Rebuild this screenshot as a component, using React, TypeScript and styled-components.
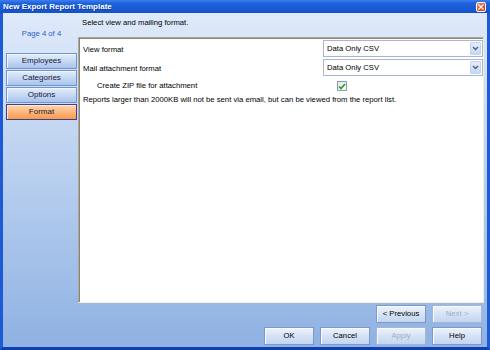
import styled, { createGlobalStyle } from 'styled-components'

const GlobalStyle = createGlobalStyle`
  html, body {
    margin: 0;
    padding: 0;
  }
  body {
    width: 490px;
    height: 350px;
    overflow: hidden;
    font-family: "Liberation Sans", Arial, sans-serif;
    font-size: 7.7px;
    color: #000;
  }
  * {
    box-sizing: border-box;
  }
`

const Window = styled.div`
  width: 490px;
  height: 350px;
  display: flex;
  flex-direction: column;
`

const TitleBar = styled.div`
  height: 13px;
  display: flex;
  align-items: center;
  justify-content: space-between;
  padding: 0 4px 0 3px;
  background: linear-gradient(#3d7ff0 0%, #1e62dc 25%, #195ad6 70%, #1650c6 100%);
`

const TitleText = styled.span`
  font-size: 8px;
  font-weight: 700;
  color: #fff;
  text-shadow: 1px 1px 0 #0d3a9c;
`

const CloseButton = styled.div`
  width: 10px;
  height: 10px;
  margin-top: 1px;
  border: 1px solid #fff;
  border-radius: 2px;
  background: linear-gradient(135deg, #f08a64, #d9512a 60%, #c8401c);
  display: flex;
  align-items: center;
  justify-content: center;
`

const Frame = styled.div`
  flex: 1;
  display: flex;
  flex-direction: column;
  border-left: 3px solid #1d5ad5;
  border-right: 3px solid #1d5ad5;
  border-bottom: 3px solid #0d3fae;
  background: linear-gradient(#dfeafa, #8fb2e3);
`

const Main = styled.div`
  height: 290px;
  display: grid;
  grid-template-columns: 75px 406px;
  grid-template-rows: 24px 1fr;
`

const Sidebar = styled.div`
  grid-row: 1 / span 2;
  display: flex;
  flex-direction: column;
  padding: 16px 1px 0 3px;
`

const PageLabel = styled.div`
  height: 10px;
  line-height: 10px;
  text-align: center;
  color: #2c5fc6;
  margin-bottom: 14px;
`

const NavList = styled.div`
  display: flex;
  flex-direction: column;
  gap: 1px;
`

const NavButton = styled.div<{ active?: boolean }>`
  height: 16px;
  line-height: 14px;
  text-align: center;
  font-size: 8px;
  color: #15203c;
  border: 1px solid ${p => (p.active ? '#3d3f8c' : '#7193d0')};
  background: ${p =>
    p.active
      ? 'linear-gradient(#ffd6ae, #fdb77c 50%, #f99a4e)'
      : 'linear-gradient(#e4edfb, #c6d9f5 50%, #a9c3ec)'};
  box-shadow: inset 1px 1px 0 ${p => (p.active ? '#ffe8cf' : '#f2f7fe')};
`

const Header = styled.div`
  padding: 5px 0 0 4px;
  line-height: 10px;
`

const Panel = styled.div`
  background: #fff;
  border-top: 1px solid #aca899;
  border-left: 1px solid #aca899;
  border-right: 1px solid #f1efe2;
  border-bottom: 1px solid #f1efe2;
  box-shadow: inset 1px 1px 0 #8a877a;
  padding: 2px 0 0 4px;
  display: grid;
  grid-template-columns: 240px 160px;
  grid-auto-rows: min-content;
`

const FieldLabel = styled.div<{ indent?: boolean }>`
  display: flex;
  align-items: center;
  padding-left: ${p => (p.indent ? '14px' : '0')};
`

const Select = styled.div`
  height: 17px;
  margin-bottom: 2px;
  border: 1px solid #a7b7d3;
  background: #fff;
  display: flex;
  align-items: center;
  justify-content: space-between;
  padding: 0 1px 0 3px;
`

const SelectArrow = styled.div`
  width: 11px;
  height: 13px;
  border-radius: 1px;
  background: linear-gradient(#e6eefc, #c6d8f4);
  border: 1px solid #c3d3ee;
  display: flex;
  align-items: center;
  justify-content: center;
`

const CheckCell = styled.div`
  height: 12px;
  margin-top: 2px;
  padding-left: 14px;
  display: flex;
  align-items: center;
`

const CheckBox = styled.div`
  width: 10px;
  height: 10px;
  border: 1px solid #8c9cb6;
  background: linear-gradient(135deg, #e2e6ee, #fbfbfc);
  display: flex;
  align-items: center;
  justify-content: center;
`

const Note = styled.div`
  grid-column: 1 / span 2;
  margin-top: 3px;
  line-height: 10px;
`

const Footer = styled.div`
  flex: 1;
  display: flex;
  flex-direction: column;
  align-items: flex-end;
  gap: 4px;
  padding: 2px 5px 0 0;
`

const ButtonRow = styled.div`
  display: flex;
  gap: 6px;
`

const Button = styled.div<{ disabled?: boolean }>`
  width: 50px;
  height: 18px;
  line-height: 16px;
  text-align: center;
  font-size: 7.7px;
  color: ${p => (p.disabled ? '#a4adbd' : '#000')};
  border: 1px solid ${p => (p.disabled ? '#a3b6d6' : '#7d98c5')};
  background: linear-gradient(#eef3fc, #d6e3f6 50%, #c3d5ef);
  box-shadow: inset 1px 1px 0 #f8fbff;
`

function Chevron() {
  return (
    <svg width="7" height="5" viewBox="0 0 7 5">
      <path d="M1 1 L3.5 3.5 L6 1" fill="none" stroke="#4a5e86" strokeWidth="1.4" />
    </svg>
  )
}

function App() {
  const navItems = ['Employees', 'Categories', 'Options', 'Format']

  return (
    <>
      <GlobalStyle />
      <Window>
        <TitleBar>
          <TitleText>New Export Report Template</TitleText>
          <CloseButton>
            <svg width="6" height="6" viewBox="0 0 6 6">
              <path d="M0.5 0.5 L5.5 5.5 M5.5 0.5 L0.5 5.5" stroke="#fff" strokeWidth="1.3" />
            </svg>
          </CloseButton>
        </TitleBar>
        <Frame>
          <Main>
            <Sidebar>
              <PageLabel>Page 4 of 4</PageLabel>
              <NavList>
                {navItems.map(item => (
                  <NavButton key={item} active={item === 'Format'}>
                    {item}
                  </NavButton>
                ))}
              </NavList>
            </Sidebar>
            <Header>Select view and mailing format.</Header>
            <Panel>
              <FieldLabel>View format</FieldLabel>
              <Select>
                <span>Data Only CSV</span>
                <SelectArrow>
                  <Chevron />
                </SelectArrow>
              </Select>
              <FieldLabel>Mail attachment format</FieldLabel>
              <Select>
                <span>Data Only CSV</span>
                <SelectArrow>
                  <Chevron />
                </SelectArrow>
              </Select>
              <FieldLabel indent>Create ZIP file for attachment</FieldLabel>
              <CheckCell>
                <CheckBox>
                  <svg width="8" height="7" viewBox="0 0 8 7">
                    <path d="M1 3.5 L3 5.5 L7 1" fill="none" stroke="#21a121" strokeWidth="1.6" />
                  </svg>
                </CheckBox>
              </CheckCell>
              <Note>
                Reports larger than 2000KB will not be sent via email, but can be viewed from the report list.
              </Note>
            </Panel>
          </Main>
          <Footer>
            <ButtonRow>
              <Button>&lt; Previous</Button>
              <Button disabled>Next &gt;</Button>
            </ButtonRow>
            <ButtonRow>
              <Button>OK</Button>
              <Button>Cancel</Button>
              <Button disabled>Apply</Button>
              <Button>Help</Button>
            </ButtonRow>
          </Footer>
        </Frame>
      </Window>
    </>
  )
}

export default App
